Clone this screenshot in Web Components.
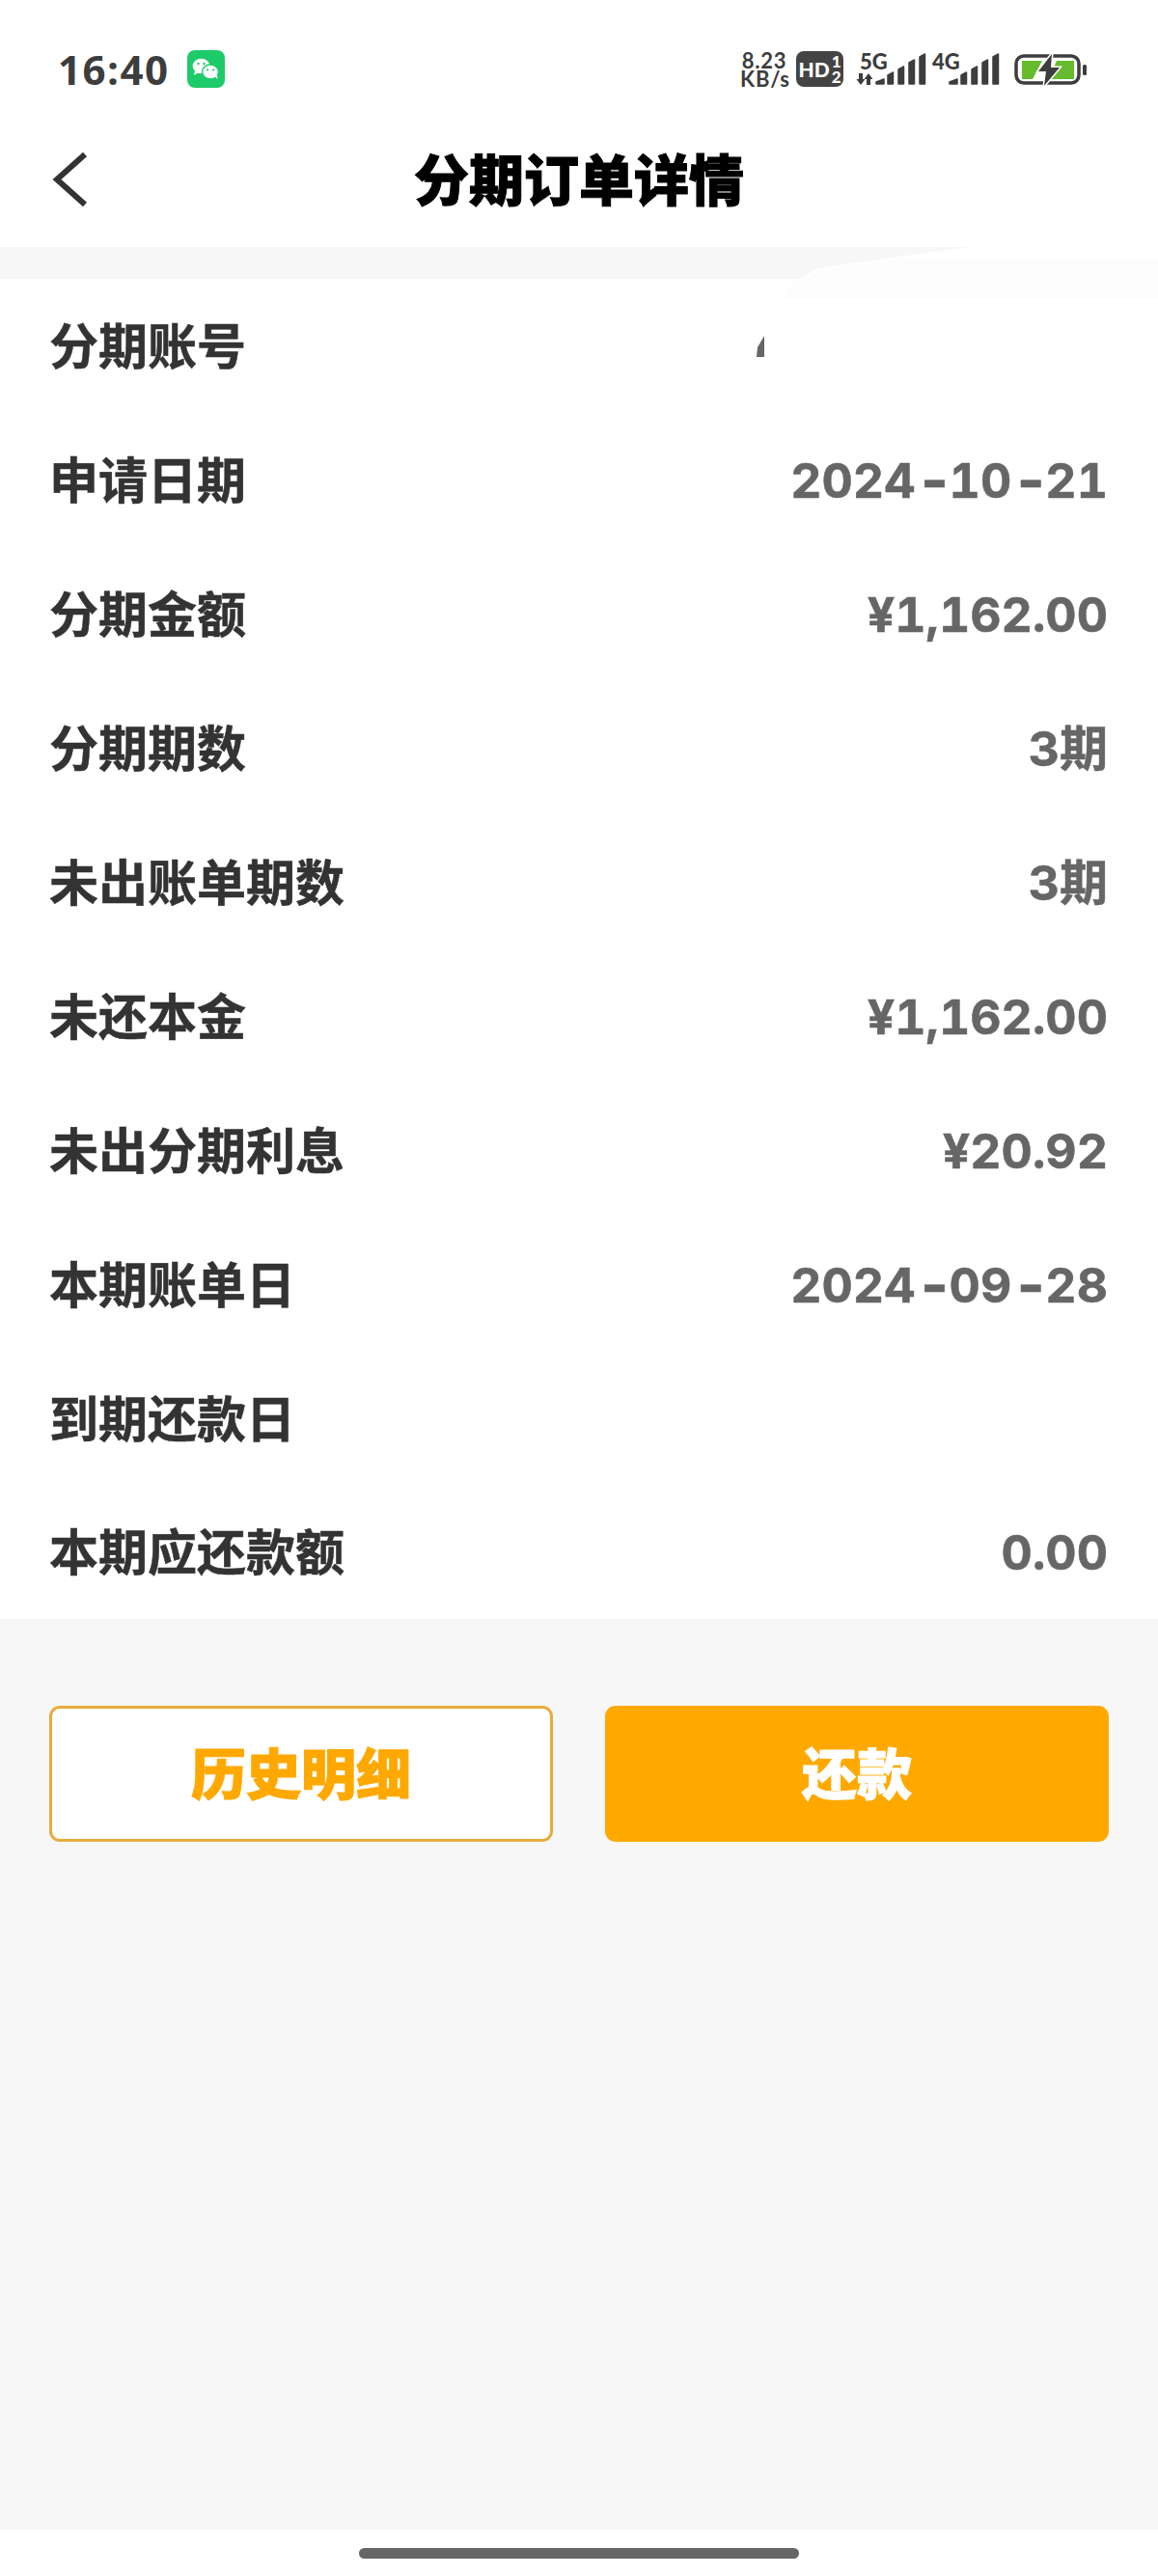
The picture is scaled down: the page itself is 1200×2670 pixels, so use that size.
<!DOCTYPE html>
<html lang="zh">
<head>
<meta charset="utf-8">
<title>分期订单详情</title>
<style>
  html, body { margin: 0; padding: 0; background: #fff; }
  body { font-family: "Noto Sans CJK SC", sans-serif; }
</style>
</head>
<body>
<order-page>
  <status-bar slot="status" time="16:40" speed="8.23" unit="KB/s"></status-bar>
  <nav-bar slot="nav">分期订单详情</nav-bar>
  <detail-card slot="card">
    <info-row label="分期账号"></info-row>
    <info-row label="申请日期" value="2024-10-21"></info-row>
    <info-row label="分期金额" value="¥1,162.00"></info-row>
    <info-row label="分期期数" value="3期"></info-row>
    <info-row label="未出账单期数" value="3期"></info-row>
    <info-row label="未还本金" value="¥1,162.00"></info-row>
    <info-row label="未出分期利息" value="¥20.92"></info-row>
    <info-row label="本期账单日" value="2024-09-28"></info-row>
    <info-row label="到期还款日"></info-row>
    <info-row label="本期应还款额" value="0.00"></info-row>
  </detail-card>
  <action-button slot="actions" kind="outline">历史明细</action-button>
  <action-button slot="actions" kind="solid">还款</action-button>
</order-page>

<script>
const pageTemplate = document.createElement("template");
pageTemplate.innerHTML = `
  <style>
    :host {
      display: flex;
      flex-direction: column;
      width: 1200px;
      height: 2670px;
      background: #fff;
      overflow: hidden;
    }
    main {
      flex: 1;
      display: flex;
      flex-direction: column;
      background: #f7f7f7;
      padding-top: 33px;
    }
    .actions {
      display: grid;
      grid-template-columns: 1fr 1fr;
      gap: 54px;
      padding: 90px 51px 0;
    }
    footer {
      height: 48px;
      background: #fff;
      display: flex;
      justify-content: center;
      padding-top: 19px;
      box-sizing: border-box;
    }
    footer i {
      display: block;
      width: 456px;
      height: 11px;
      border-radius: 6px;
      background: #666;
    }
  </style>
  <slot name="status"></slot>
  <slot name="nav"></slot>
  <main>
    <slot name="card"></slot>
    <div class="actions"><slot name="actions"></slot></div>
  </main>
  <footer><i></i></footer>
`;

class OrderPage extends HTMLElement {
  constructor() {
    super();
    this.attachShadow({ mode: "open" }).appendChild(pageTemplate.content.cloneNode(true));
  }
}

// signal bars rise to the right, each with a slanted top
function signalBars() {
  const bars = [[0, 8, 27], [12, 5.5, 20], [23, 5.5, 14], [34, 5.5, 7], [45, 5.5, 1]];
  const d = bars.map(([x, w, top]) => `M${x} 32V${top + 3}L${x + w} ${top}V32z`).join("");
  return `<path d="${d}" stroke="#3d3d3d" stroke-width="1.500" stroke-linejoin="round"/>`;
}

const statusTemplate = document.createElement("template");
statusTemplate.innerHTML = `
  <style>
    :host {
      display: flex;
      align-items: center;
      height: 116px;
      padding: 27px 73px 0 60px;
      box-sizing: border-box;
      color: #3d3d3d;
      font-family: "Open Sans", "Liberation Sans", sans-serif;
    }
    .time {
      font-size: 42px;
      font-weight: 700;
      letter-spacing: 1.5px;
      line-height: 50px;
      width: 134px;
    }
    .wechat { display: block; }
    .right {
      margin-left: auto;
      display: flex;
      align-items: center;
    }
    .speed {
      font-family: "Lato", sans-serif;
      font-weight: 700;
      font-size: 22px;
      letter-spacing: 0.8px;
      line-height: 19px;
      text-align: center;
      width: 50px;
      margin-right: 8px;
    }
    .speed span { display: block; white-space: nowrap; }
    .hd {
      display: flex;
      align-items: center;
      justify-content: center;
      gap: 2px;
      width: 49px;
      height: 37px;
      border-radius: 8px;
      background: #444;
      color: #fff;
      font-family: "Lato", sans-serif;
      font-weight: 900;
      font-size: 21px;
      margin-right: 13px;
    }
    .hd small {
      display: flex;
      flex-direction: column;
      font-size: 17px;
      line-height: 16px;
    }
    svg { display: block; fill: #3d3d3d; }
    svg text { font-family: "Lato", sans-serif; font-weight: 900; font-size: 22px; }
    .sim5 { margin-right: 6px; }
    .sim4 { margin-right: 15px; }
  </style>
  <div class="time"></div>
  <svg class="wechat" width="39" height="39" viewBox="0 0 39 39">
    <rect width="39" height="39" rx="8" fill="#1ecb69"/>
    <ellipse cx="14.500" cy="16.500" rx="8.800" ry="7.800" fill="#fff"/>
    <path d="M8 21l-1 5 5-3z" fill="#fff"/>
    <ellipse cx="24" cy="22.500" rx="8.500" ry="7.500" fill="#fff" stroke="#1ecb69" stroke-width="1.500"/>
    <path d="M28 27l3.500 3-.5-5z" fill="#fff"/>
    <g fill="#1ecb69"><circle cx="11.500" cy="14" r="1.200"/><circle cx="17.500" cy="14" r="1.200"/><circle cx="21" cy="20.500" r="1.100"/><circle cx="27" cy="20.500" r="1.100"/></g>
  </svg>
  <div class="right">
    <div class="speed"><span class="num"></span><span class="unit"></span></div>
    <div class="hd">HD<small><span>1</span><span>2</span></small></div>
    <svg class="sim5" width="73" height="44" viewBox="0 -5 73 44">
      <text x="4" y="17">5G</text>
      <path d="M3 21h4v6h2.500L5 33 .5 27H3zM11 33h4v-6h2.500L13 21 8.500 27H11z"/>
      <g transform="translate(21 0)">${signalBars()}</g>
    </svg>
    <svg class="sim4" width="70" height="44" viewBox="0 -5 70 44">
      <text x="0" y="17">4G</text>
      <g transform="translate(18 0)">${signalBars()}</g>
    </svg>
    <svg width="76" height="34" viewBox="0 0 76 34">
      <rect x="2" y="3" width="65" height="28" rx="8" fill="none" stroke="#3d3d3d" stroke-width="3.500"/>
      <path d="M8 8H29L19 27H8zM44 8H62V27H36z" fill="#66bb2e"/>
      <rect x="71" y="12" width="4" height="11" rx="1.500"/>
      <path d="M39 1 25 19H33L31 34 47 15H38z" fill="#3d3d3d" stroke="#fff" stroke-width="3" paint-order="stroke"/>
    </svg>
  </div>
`;

class StatusBar extends HTMLElement {
  constructor() {
    super();
    this.attachShadow({ mode: "open" }).appendChild(statusTemplate.content.cloneNode(true));
  }

  connectedCallback() {
    this.shadowRoot.querySelector(".time").textContent = this.getAttribute("time");
    this.shadowRoot.querySelector(".num").textContent = this.getAttribute("speed");
    this.shadowRoot.querySelector(".unit").textContent = this.getAttribute("unit");
  }
}

const navTemplate = document.createElement("template");
navTemplate.innerHTML = `
  <style>
    :host {
      display: grid;
      grid-template-columns: 1fr auto 1fr;
      align-items: center;
      height: 140px;
      background: #fff;
    }
    svg { display: block; margin-left: 53px; }
    h1 {
      margin: 0 0 7px;
      font-family: "Noto Sans CJK SC", sans-serif;
      font-size: 57px;
      font-weight: 900;
      line-height: 70px;
      color: #000;
      -webkit-text-stroke: 1px #000;
    }
  </style>
  <svg width="38" height="58" viewBox="0 0 38 58">
    <path d="M35 3 6 29l29 26" fill="none" stroke="#333" stroke-width="6"/>
  </svg>
  <h1><slot></slot></h1>
`;

class NavBar extends HTMLElement {
  constructor() {
    super();
    this.attachShadow({ mode: "open" }).appendChild(navTemplate.content.cloneNode(true));
  }
}

const cardTemplate = document.createElement("template");
cardTemplate.innerHTML = `
  <style>
    :host {
      display: block;
      position: relative;
      background: #fff;
    }
    /* retouched patch over the account number, runs up into the grey strip */
    svg {
      position: absolute;
      left: 0;
      top: -33px;
      pointer-events: none;
    }
  </style>
  <slot></slot>
  <svg width="1200" height="120" viewBox="0 256 1200 120">
    <path d="M1005 256 975 260 868 275 845 279 831 289H1200V256z" fill="#fff"/>
    <path d="M1200 268H930L850 280 825 292 808 311H1200z" fill="#fdfdfd"/>
    <path d="M792 348 785 360 784 370H792z" fill="#666"/>
  </svg>
`;

class DetailCard extends HTMLElement {
  constructor() {
    super();
    this.attachShadow({ mode: "open" }).appendChild(cardTemplate.content.cloneNode(true));
  }
}

const rowTemplate = document.createElement("template");
rowTemplate.innerHTML = `
  <style>
    :host {
      display: flex;
      align-items: center;
      justify-content: space-between;
      height: 138.900px;
      padding: 0 52px 0 51px;
    }
    .label {
      font-family: "Noto Sans CJK SC", sans-serif;
      font-size: 51px;
      font-weight: 700;
      color: #333;
      -webkit-text-stroke: 0.5px #333;
      margin-bottom: 4px;
    }
    .value {
      font-family: Inter, "Noto Sans CJK SC", sans-serif;
      font-size: 50px;
      font-weight: 700;
      line-height: 60px;
      font-variant-numeric: tabular-nums;
      color: #666;
      -webkit-text-stroke: 0.5px #666;
      margin-top: 2px;
    }
    /* the dates have a longer, thicker dash than the font's hyphen */
    .dash {
      font-size: 62px;
      letter-spacing: -5px;
      line-height: 0;
      vertical-align: -4px;
    }
  </style>
  <span class="label"></span>
  <span class="value"></span>
`;

class InfoRow extends HTMLElement {
  constructor() {
    super();
    this.attachShadow({ mode: "open" }).appendChild(rowTemplate.content.cloneNode(true));
  }

  connectedCallback() {
    this.shadowRoot.querySelector(".label").textContent = this.getAttribute("label");
    const value = this.shadowRoot.querySelector(".value");
    const parts = (this.getAttribute("value") || "").split("-");
    parts.forEach((part, i) => {
      if (i > 0) {
        const dash = document.createElement("span");
        dash.className = "dash";
        dash.textContent = "-";
        value.appendChild(dash);
      }
      value.appendChild(document.createTextNode(part));
    });
  }
}

const buttonTemplate = document.createElement("template");
buttonTemplate.innerHTML = `
  <style>
    :host {
      display: flex;
      align-items: center;
      justify-content: center;
      height: 141px;
      box-sizing: border-box;
      border-radius: 11px;
      padding-bottom: 7px;
      font-family: "Noto Sans CJK SC", sans-serif;
      font-size: 57px;
      font-weight: 900;
      -webkit-text-stroke: 1px currentColor;
    }
    :host([kind="outline"]) {
      background: #fff;
      border: 3px solid #e9ab3c;
      color: #ffa800;
    }
    :host([kind="solid"]) {
      background: #ffa900;
      color: #fff;
    }
  </style>
  <slot></slot>
`;

class ActionButton extends HTMLElement {
  constructor() {
    super();
    this.attachShadow({ mode: "open" }).appendChild(buttonTemplate.content.cloneNode(true));
  }
}

customElements.define("order-page", OrderPage);
customElements.define("status-bar", StatusBar);
customElements.define("nav-bar", NavBar);
customElements.define("detail-card", DetailCard);
customElements.define("info-row", InfoRow);
customElements.define("action-button", ActionButton);
</script>
</body>
</html>
